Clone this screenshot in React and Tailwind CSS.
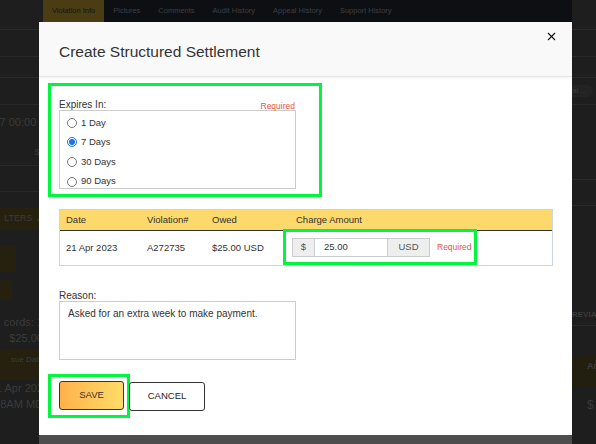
import { X } from "lucide-react";

const tabs = ["Violation Info", "Pictures", "Comments", "Audit History", "Appeal History", "Support History"];

const Radio = ({ label, checked }) => (
  <label className="flex items-center gap-[4px] h-[19.6px]">
    <span
      className={`w-[10px] h-[10px] rounded-full border flex items-center justify-center bg-white ${
        checked ? "border-[#1a73e8]" : "border-[#767676]"
      }`}
    >
      {checked && <span className="w-[6px] h-[6px] rounded-full bg-[#1a73e8]"></span>}
    </span>
    <span>{label}</span>
  </label>
);

const App = () => {
  return (
    <div
      className="relative w-[596px] h-[444px] overflow-hidden bg-[#1e1e1e] text-[#333]"
      style={{ fontFamily: '"Liberation Sans", Arial, sans-serif' }}
    >
      {/* dimmed page behind the modal */}
      <div className="flex h-full">
        <div className="w-[43px] overflow-hidden whitespace-nowrap flex flex-col text-[11px] text-[#3b3b3b]">
          <div className="h-[30px] shrink-0 border-b border-[#2a2a2a]"></div>
          <div className="h-[27px] shrink-0 border-b border-[#2a2a2a]"></div>
          <div className="h-[21px] shrink-0 border-b border-[#2a2a2a]"></div>
          <div className="h-[27px] shrink-0 border-b border-[#2a2a2a]"></div>
          <div className="h-[35px] shrink-0 flex items-center justify-end">7 00:00 -</div>
          <div className="h-[26px] shrink-0 border-b border-[#2a2a2a] flex items-end justify-end pb-[6px]">s:</div>
          <div className="h-[26px] shrink-0 border-b border-[#2a2a2a]"></div>
          <div className="h-[16px] shrink-0"></div>
          <div className="h-[22px] shrink-0 bg-[#26210f] flex items-center justify-end text-[9px]">LTERS ⌄</div>
          <div className="h-[16px] shrink-0"></div>
          <div className="h-[26px] shrink-0 w-[16px] bg-[#26210f] rounded"></div>
          <div className="h-[8px] shrink-0"></div>
          <div className="h-[20px] shrink-0 w-[12px] bg-[#26210f] rounded"></div>
          <div className="h-[30px] shrink-0 flex items-end justify-end">cords: 1</div>
          <div className="h-[16px] shrink-0 flex items-end justify-end">$25.00</div>
          <div className="h-[30px] shrink-0 mt-[4px] bg-[#26210f] text-[8px] flex items-start pt-[4px] justify-end">sue Date</div>
          <div className="h-[16px] shrink-0 flex items-end justify-end">1 Apr 202</div>
          <div className="h-[16px] shrink-0 flex items-end justify-end">58AM MD</div>
        </div>
        <div className="w-[529px] flex flex-col">
          <div className="h-[22px] bg-[#0e0f12] flex items-center text-[7.5px] text-[#3e3f44]">
            {tabs.map((t, i) => (
              <div
                key={t}
                className={`h-full flex items-center px-[9px] ${i === 0 ? "bg-[#4a3d14] text-[#151310]" : ""}`}
              >
                {t}
              </div>
            ))}
          </div>
        </div>
        <div className="flex-1 overflow-hidden whitespace-nowrap flex flex-col text-[11px] text-[#3b3b3b]">
          <div className="h-[30px] shrink-0 border-b border-[#2a2a2a]"></div>
          <div className="h-[27px] shrink-0 border-b border-[#2a2a2a]"></div>
          <div className="h-[21px] shrink-0 border-b border-[#2a2a2a]"></div>
          <div className="h-[27px] shrink-0 border-b border-[#2a2a2a] flex items-center">
            <span className="rounded-r-full bg-[#232323] pr-2 text-[8px]">ai...</span>
          </div>
          <div className="h-[75px] shrink-0 border-b border-[#2a2a2a]"></div>
          <div className="h-[26px] shrink-0 border-b border-[#2a2a2a]"></div>
          <div className="h-[120px] shrink-0 border-b border-[#2a2a2a] flex items-end pb-[4px] text-[8px] font-bold">REVIATI</div>
          <div className="h-[30px] shrink-0"></div>
          <div className="h-[32px] shrink-0 bg-[#231f10] text-[9px] font-bold pl-[15px] pt-[4px]">Ar</div>
          <div className="h-[34px] shrink-0 flex items-center pl-[15px] text-[12px]">$</div>
        </div>
      </div>

      {/* modal */}
      <div className="absolute left-[39px] top-[22px] w-[533px] h-[422px] flex flex-col bg-white">
        <div className="relative h-[55px] bg-[#f9f9f9] border-b border-[#e6e6e6] shadow-[0_1px_2px_rgba(0,0,0,0.06)] flex items-center pl-[20px] pt-[5px]">
          <h2 className="text-[15.5px] text-[#333]">Create Structured Settlement</h2>
          <button className="absolute right-[14px] top-[8px] text-[#111]">
            <X size={13} strokeWidth={2} />
          </button>
        </div>

        <div className="flex-1 flex flex-col pl-[9px] pt-[6px] text-[10px]">
          {/* expires in */}
          <div className="w-[274px] border-[3px] border-[#00f53d] pt-[13px] pl-[8px] pr-[23px] pb-[5px]">
            <div className="flex justify-between items-end h-[11px] leading-none">
              <span className="text-[10px] text-[#333]">Expires In:</span>
              <span className="text-[8.5px] text-[#e8553a] pr-[1px]">Required</span>
            </div>
            <div className="h-[79px] border border-[#cccccc] pl-[7px] pt-[2px] text-[9.5px] text-[#333]">
              <Radio label="1 Day" />
              <Radio label="7 Days" checked />
              <Radio label="30 Days" />
              <Radio label="90 Days" />
            </div>
          </div>

          {/* table */}
          <div className="mt-[12px] ml-[11px] w-[494px] border border-[#c9d7de] text-[9.5px] text-[#333]">
            <div className="h-[21px] bg-[#fdd86b] border-b border-[#333] flex items-center">
              <span className="w-[82px] pl-[6px]">Date</span>
              <span className="w-[65px] pl-[5px]">Violation#</span>
              <span className="w-[81px] pl-[5px]">Owed</span>
              <span className="pl-[8px]">Charge Amount</span>
            </div>
            <div className="h-[34px] flex items-center">
              <span className="w-[82px] pl-[6px]">21 Apr 2023</span>
              <span className="w-[65px] pl-[5px]">A272735</span>
              <span className="w-[76px] pl-[5px]">$25.00 USD</span>
              <div className="h-[36px] -mt-[2px] border-[3px] border-[#00f53d] flex items-center pl-[6px] pr-[2px] bg-white">
                <div className="flex h-[19px] border border-[#cccccc]">
                  <span className="w-[22px] bg-[#eeeeee] border-r border-[#cccccc] flex items-center justify-center text-[#555]">$</span>
                  <span className="w-[72px] flex items-center pl-[9px]">25.00</span>
                  <span className="w-[42px] bg-[#eeeeee] border-l border-[#cccccc] flex items-center justify-center text-[#555]">USD</span>
                </div>
                <span className="ml-[7px] text-[8.5px] text-[#e8553a]">Required</span>
              </div>
            </div>
          </div>

          {/* reason */}
          <div className="mt-[25px] ml-[11px] h-[10px] leading-none text-[10px] text-[#333]">Reason:</div>
          <div className="ml-[11px] w-[237px] h-[59px] border border-[#cccccc] px-[8px] pt-[4px] text-[10px] text-[#333]">
            Asked for an extra week to make payment.
          </div>

          {/* buttons */}
          <div className="mt-[14px] flex items-center">
            <div className="border-[3px] border-[#00f53d] pt-[4px] pb-[5px] pl-[8px] pr-[3px]">
              <button className="w-[65px] h-[29px] rounded-[3px] border border-[#333] bg-gradient-to-r from-[#ffb14c] to-[#ffdc67] text-[9.5px] text-[#333]">
                SAVE
              </button>
            </div>
            <button className="w-[76px] h-[29px] -ml-[1px] rounded-[3px] border border-[#333] bg-white text-[9.5px] text-[#222]">
              CANCEL
            </button>
          </div>
        </div>

        <div className="h-[9px] bg-[#4d4d4d]"></div>
      </div>
    </div>
  );
};

export default App;
